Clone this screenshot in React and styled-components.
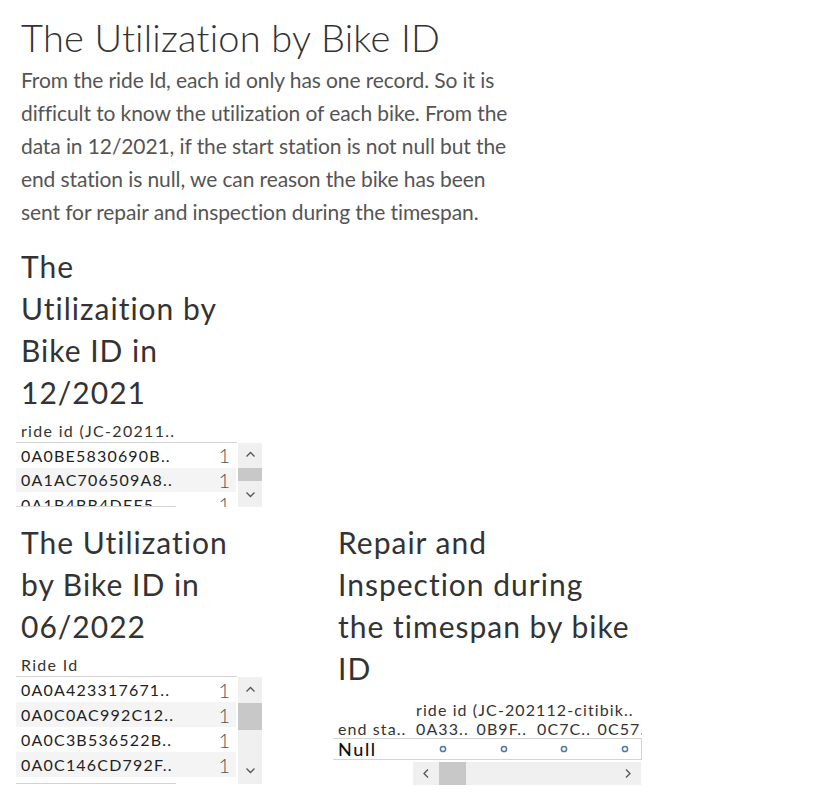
import React from "react";
import styled, { createGlobalStyle } from "styled-components";

const GlobalStyle = createGlobalStyle`
  body {
    margin: 0;
    background: #ffffff;
    font-family: "Lato", "Open Sans", sans-serif;
    color: #333333;
  }
`;

const Page = styled.div`
  width: 827px;
  height: 804px;
  padding: 14px 0 0 16px;
  box-sizing: border-box;
  overflow: hidden;
`;

const Title = styled.h1`
  margin: 0 0 0 5px;
  font-size: 38px;
  font-weight: 300;
  letter-spacing: 0.2px;
  line-height: 46px;
  color: #333;
`;

const Intro = styled.p`
  margin: 3px 0 0 5px;
  font-size: 21px;
  letter-spacing: -0.1px;
  line-height: 33px;
  color: #555;
`;

const SheetTitle = styled.h2`
  margin: 0 0 0 5px;
  font-size: 30px;
  font-weight: 400;
  letter-spacing: 1px;
  line-height: 42px;
  color: #333;
`;

const Section = styled.section`
  width: ${(p) => p.$width}px;
  margin-top: ${(p) => p.$top || 0}px;
`;

const Row = styled.div`
  display: flex;
  gap: 71px;
  margin-top: 14px;
`;

const ListHead = styled.div`
  width: 221px;
  margin-top: ${(p) => p.$top}px;
  padding: 2px 0 2px 5px;
  box-sizing: border-box;
  font-size: 16px;
  letter-spacing: 1.3px;
  border-bottom: 1px solid #d4d4d4;
`;

const ListBody = styled.div`
  display: flex;
  height: ${(p) => p.$height}px;
  overflow: hidden;
`;

const Rows = styled.div`
  width: 222px;
  position: relative;
`;

const ListRow = styled.div`
  display: flex;
  justify-content: space-between;
  align-items: center;
  height: ${(p) => p.$h}px;
  width: 220px;
  padding: 0 6px 0 5px;
  box-sizing: border-box;
  background: ${(p) => (p.$shade ? "#f4f4f4" : "#fff")};
  font-size: 16px;
  letter-spacing: 1.2px;
  color: #222;
`;

const Count = styled.span`
  font-size: 20px;
  font-weight: 300;
  letter-spacing: 0;
  color: #555;
`;

const BottomRule = styled.div`
  position: absolute;
  left: 0;
  bottom: 0;
  width: 160px;
  border-bottom: 1px solid #d4d4d4;
`;

const VScroll = styled.div`
  width: 24px;
  background: #f0f0f0;
  display: flex;
  flex-direction: column;
  align-items: center;
  justify-content: space-between;
  padding: ${(p) => p.$pad}px 0;
  box-sizing: border-box;
  position: relative;
`;

const VThumb = styled.div`
  position: absolute;
  left: 0;
  top: ${(p) => p.$top}px;
  width: 24px;
  height: ${(p) => p.$size}px;
  background: #c8c8c8;
`;

const Matrix = styled.div`
  margin-top: 11px;
  width: 309px;
`;

const MatrixHead = styled.div`
  font-size: 16px;
  letter-spacing: 1.1px;
  line-height: 19px;
  padding-left: 83px;
  white-space: nowrap;
`;

const MatrixCols = styled.div`
  display: flex;
  font-size: 16px;
  letter-spacing: 1.1px;
  line-height: 19px;
  white-space: nowrap;
  overflow: hidden;
`;

const RowLabel = styled.div`
  width: 80px;
  padding-left: 5px;
  box-sizing: border-box;
  flex-shrink: 0;
  overflow: hidden;
`;

const ColCell = styled.div`
  width: 60.5px;
  flex-shrink: 0;
  display: flex;
  justify-content: ${(p) => (p.$center ? "center" : "flex-start")};
  padding-left: ${(p) => (p.$center ? 0 : 3)}px;
  box-sizing: border-box;
`;

const NullRow = styled.div`
  display: flex;
  align-items: center;
  height: 20px;
  border-top: 1px solid #d4d4d4;
  border-bottom: 1px solid #d4d4d4;
  border-right: 1px solid #d4d4d4;
  font-size: 18px;
  font-weight: 500;
  letter-spacing: 1.6px;
  color: #111;
`;

const HScroll = styled.div`
  margin: 2px 0 0 80px;
  width: 228px;
  height: 23px;
  background: #f0f0f0;
  display: flex;
  align-items: center;
  justify-content: space-between;
  padding: 0 8px;
  box-sizing: border-box;
  position: relative;
`;

const HThumb = styled.div`
  position: absolute;
  top: 0;
  left: 26px;
  width: 27px;
  height: 23px;
  background: #c8c8c8;
`;

const Chevron = ({ dir }) => {
  const d = {
    up: "M1.5 6.5 L5.5 2.5 L9.5 6.5",
    down: "M1.5 3.5 L5.5 7.5 L9.5 3.5",
    left: "M7 1.5 L3 5.5 L7 9.5",
    right: "M4 1.5 L8 5.5 L4 9.5",
  }[dir];
  return (
    <svg width="11" height="11" viewBox="0 0 11 11" style={{ position: "relative" }}>
      <path d={d} fill="none" stroke="#555" strokeWidth="1.3" />
    </svg>
  );
};

const Dot = () => (
  <svg width="8" height="8" viewBox="0 0 8 8">
    <circle cx="4" cy="4" r="2.6" fill="none" stroke="#4e79a7" strokeWidth="1.5" />
  </svg>
);

const list2021 = ["0A0BE5830690B..", "0A1AC706509A8..", "0A1B4BB4DEE5.."];
const list2022 = ["0A0A423317671..", "0A0C0AC992C12..", "0A0C3B536522B..", "0A0C146CD792F..", "0A0C2B8E4A7.."];

const IdList = ({ head, headTop, items, height, rowH, thumbTop, thumbSize, pad }) => (
  <div>
    <ListHead $top={headTop}>{head}</ListHead>
    <ListBody $height={height}>
      <Rows>
        {items.map((id, i) => (
          <ListRow key={id} $h={rowH} $shade={i % 2 === 1}>
            <span>{id}</span>
            <Count>1</Count>
          </ListRow>
        ))}
        <BottomRule />
      </Rows>
      <VScroll $pad={pad}>
        <Chevron dir="up" />
        <VThumb $top={thumbTop} $size={thumbSize} />
        <Chevron dir="down" />
      </VScroll>
    </ListBody>
  </div>
);

const lines = (arr) =>
  arr.map((t, i) => (
    <React.Fragment key={i}>
      {i > 0 && <br />}
      {t}
    </React.Fragment>
  ));

export default function App() {
  return (
    <Page>
      <GlobalStyle />
      <Title>The Utilization by Bike ID</Title>
      <Intro>
        {lines([
          "From the ride Id, each id only has one record. So it is",
          "difficult to know the utilization of each bike. From the",
          "data in 12/2021, if the start station is not null but the",
          "end station is null, we can reason the bike has been",
          "sent for repair and inspection during the timespan.",
        ])}
      </Intro>

      <Section $width={260} $top={17}>
        <SheetTitle>{lines(["The", "Utilizaition by", "Bike ID in", "12/2021"])}</SheetTitle>
        <IdList
          head="ride id (JC-20211.."
          headTop={6}
          items={list2021}
          height={64}
          rowH={24.5}
          thumbTop={25}
          thumbSize={13}
          pad={7}
        />
      </Section>

      <Row>
        <Section $width={246}>
          <SheetTitle>{lines(["The Utilization", "by Bike ID in", "06/2022"])}</SheetTitle>
          <IdList
            head="Ride Id"
            headTop={6}
            items={list2022}
            height={107}
            rowH={25}
            thumbTop={26}
            thumbSize={27}
            pad={8}
          />
        </Section>
        <Section $width={320}>
          <SheetTitle>{lines(["Repair and", "Inspection during", "the timespan by bike", "ID"])}</SheetTitle>
          <Matrix>
            <MatrixHead>ride id (JC-202112-citibik..</MatrixHead>
            <MatrixCols>
              <RowLabel>end sta..</RowLabel>
              {["0A33..", "0B9F..", "0C7C..", "0C57.."].map((c) => (
                <ColCell key={c}>{c}</ColCell>
              ))}
            </MatrixCols>
            <NullRow>
              <RowLabel>Null</RowLabel>
              {[0, 1, 2, 3].map((i) => (
                <ColCell key={i} $center>
                  <Dot />
                </ColCell>
              ))}
            </NullRow>
            <HScroll>
              <Chevron dir="left" />
              <HThumb />
              <Chevron dir="right" />
            </HScroll>
          </Matrix>
        </Section>
      </Row>
    </Page>
  );
}
